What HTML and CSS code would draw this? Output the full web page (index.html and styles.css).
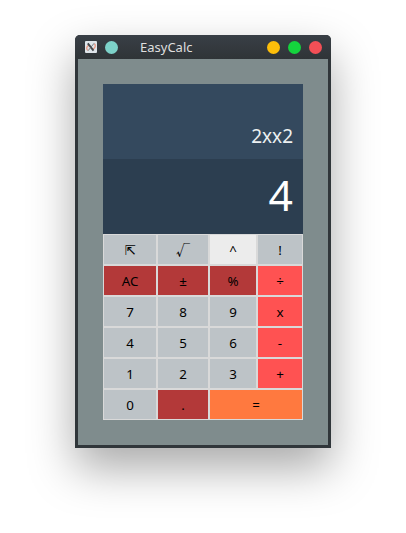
FILE: index.html
```html
<!DOCTYPE html>
<html lang="en">
<head>
<meta charset="utf-8">
<title>EasyCalc</title>
<link rel="stylesheet" href="styles.css">
</head>
<body>
<main class="window">
  <header class="titlebar">
    <svg class="app-icon" viewBox="0 0 12 12" aria-hidden="true">
      <rect width="12" height="12" rx="1" fill="#dfe5ea"/>
      <path d="M4.3 4.2C1.5 4.8.9 8 2.7 9.4M7.7 8.2C10.6 7.2 11 4.2 9.4 2.8" fill="none" stroke="#e99a85" stroke-width="1.4"/>
      <path d="M2.8 2.4L8.5 9.6" stroke="#44484c" stroke-width="1.9"/>
      <path d="M9.2 2.2L3 9.8" stroke="#66696d" stroke-width=".8"/>
    </svg>
    <span class="dot dot-pin"></span>
    <h1 class="title">EasyCalc</h1>
    <span class="controls">
      <span class="dot dot-min"></span>
      <span class="dot dot-max"></span>
      <span class="dot dot-close"></span>
    </span>
  </header>
  <section class="calc">
    <div class="expression">2xx2</div>
    <div class="result">4</div>
    <div class="keys">
      <button class="key arrow">⇱</button>
      <button class="key root">√</button>
      <button class="key hover">^</button>
      <button class="key">!</button>
      <button class="key dark">AC</button>
      <button class="key dark">±</button>
      <button class="key dark">%</button>
      <button class="key red">÷</button>
      <button class="key">7</button>
      <button class="key">8</button>
      <button class="key">9</button>
      <button class="key red">x</button>
      <button class="key">4</button>
      <button class="key">5</button>
      <button class="key">6</button>
      <button class="key red">-</button>
      <button class="key">1</button>
      <button class="key">2</button>
      <button class="key">3</button>
      <button class="key red">+</button>
      <button class="key">0</button>
      <button class="key dark">.</button>
      <button class="key equals">=</button>
    </div>
  </section>
</main>
</body>
</html>
```
FILE: styles.css
```css
* { box-sizing: border-box; }
body {
  margin: 0;
  padding: 35px 75px 0;
  height: 533px;
  overflow: hidden;
  background: #fff;
  font-family: "Noto Sans", "DejaVu Sans", sans-serif;
}
.window {
  width: 256px;
  height: 413px;
  padding: 0 3px 3px;
  background: #30363a;
  border-radius: 5px 5px 0 0;
  box-shadow: 0 20px 46px rgba(0, 0, 0, .34);
}
.titlebar {
  display: flex;
  align-items: center;
  height: 24px;
  margin: 0 -3px;
  padding: 0 9px 0 10px;
  border-radius: 5px 5px 0 0;
  background: linear-gradient(#393f46, #2f3437);
}
.app-icon { width: 12px; height: 12px; }
.dot { width: 13px; height: 13px; border-radius: 50%; }
.dot-pin { margin-left: 8px; background: #7dd2c9; }
.title {
  margin: 0 0 0 22px;
  font-size: 13px;
  font-weight: 400;
  line-height: 24px;
  color: #dfdfdf;
}
.controls { display: flex; gap: 8px; margin-left: auto; }
.dot-min { background: #fdbe0a; }
.dot-max { background: #14d33d; }
.dot-close { background: #f34f56; }
.calc {
  height: 386px;
  padding: 25px 25px 0;
  background: #7f8c8d;
}
.expression, .result {
  height: 75px;
  padding-right: 10px;
  text-align: right;
}
.expression {
  padding-top: 39px;
  background: #34495e;
  color: #ecf0f1;
  font-size: 19px;
  line-height: 26px;
}
.result {
  background: #2c3e50;
  color: #fff;
  font-size: 42.67px;
  line-height: 71px;
}
.keys {
  display: grid;
  grid-template-columns: 52px 50px 46px 44px;
  grid-auto-rows: 29px;
  gap: 2px;
  padding: 1px;
  background: #d9d9d9;
}
.key {
  margin: 0;
  padding: 1px 0 0;
  border: 0;
  background: #bdc3c7;
  color: #000;
  font: 13.33px/28px "Noto Sans", "DejaVu Sans", sans-serif;
}
.arrow { padding-top: 2px; font-family: "DejaVu Sans", sans-serif; }
.root { padding: 0 0 1px; font-family: "Noto Sans CJK JP", sans-serif; font-size: 14px; }
.hover { background: #ececec; }
.dark { background: #b33939; }
.red { background: #ff5252; }
.equals { grid-column: span 2; background: #ff793f; }
```
